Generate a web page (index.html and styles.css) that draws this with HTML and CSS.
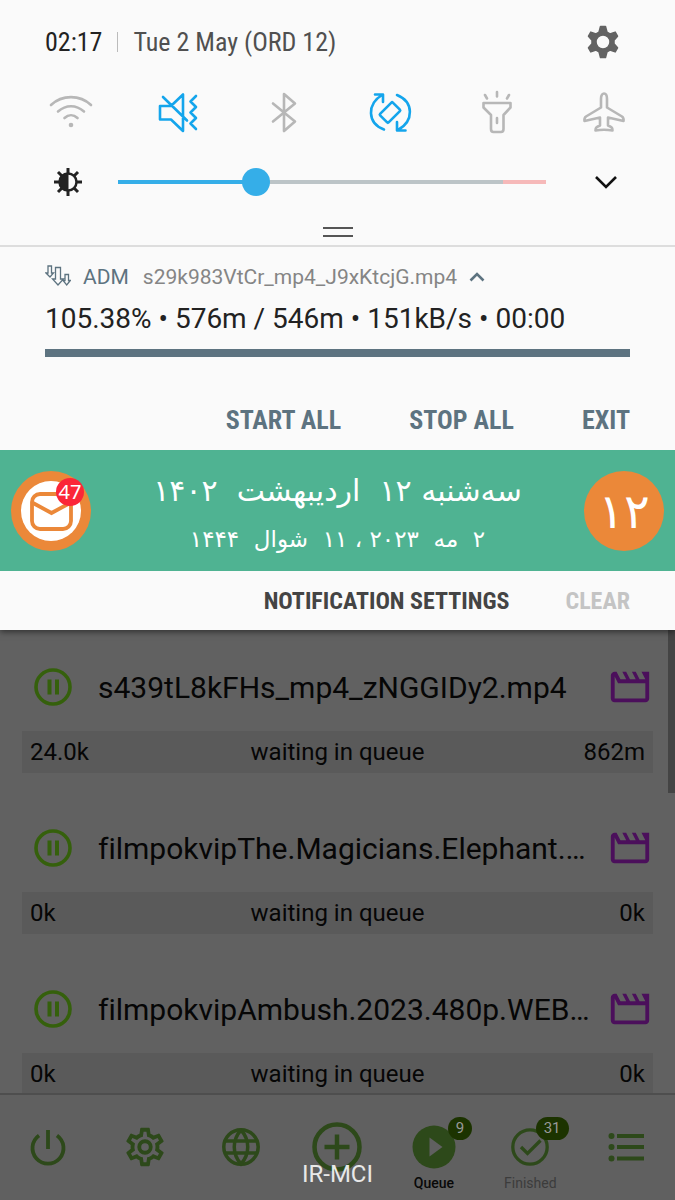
FILE: index.html
```html
<!DOCTYPE html>
<html lang="en">
<head>
    <meta charset="UTF-8">
    <meta name="viewport" content="width=device-width, initial-scale=1.0">
    <title>Notifications</title>
    <link rel="stylesheet" href="styles.css">
</head>
<body>
    <!-- Icons used more than once -->
    <svg class="sprite" aria-hidden="true">
        <symbol id="icon-pause" viewBox="0 0 46 46">
            <circle cx="23" cy="23" r="17" fill="none" stroke="currentColor" stroke-width="3.6"/>
            <path d="M17.5 15.5h4v15h-4zM25 15.5h4v15h-4z" fill="currentColor"/>
        </symbol>
        <symbol id="icon-movie" viewBox="0 0 24 24">
            <path d="M4 6.47L5.76 10H20v8H4V6.47M22 4h-4l2 4h-3l-2-4h-2l2 4h-3l-2-4H8l2 4H7L5 4H4c-1.1 0-1.99.9-1.99 2L2 18c0 1.1.9 2 2 2h16c1.1 0 2-.9 2-2V4z" fill="currentColor"/>
        </symbol>
    </svg>

    <section class="shade">
        <header class="status">
            <span class="time">02:17</span>
            <span class="separator"></span>
            <span class="date">Tue 2 May (ORD 12)</span>
            <button class="icon-btn settings" aria-label="Settings">
                <svg width="34" height="34" viewBox="-17 -17 34 34">
                    <path fill="#636363" fill-rule="evenodd" stroke="#636363" stroke-width="1.500" stroke-linejoin="round" d="M-2.500-15.500H2.500L4-9.800L7-8L12.200-9.900L14.500-5.800L11-1.700V1.700L14.500 5.800L12.200 9.900L7 8L4 9.800L2.500 15.500H-2.500L-4 9.800L-7 8L-12.200 9.900L-14.500 5.800L-11 1.700V-1.700L-14.500-5.800L-12.200-9.900L-7-8L-4-9.800ZM7 0A7 7 0 1 0-7 0A7 7 0 1 0 7 0Z"/>
                </svg>
            </button>
        </header>

        <div class="toggles">
            <button class="icon-btn" aria-label="Wi-Fi">
                <svg width="44" height="44" viewBox="0 0 44 44">
                    <g class="thin">
                        <path d="M2 15C13 4.500 31 4.500 42 15M9 21.500C17 14.500 27 14.500 35 21.500M15.500 28C19.500 24.300 24.500 24.300 28.500 28"/>
                    </g>
                    <circle cx="22" cy="35" r="2.300" fill="currentColor"/>
                </svg>
            </button>
            <button class="icon-btn on" aria-label="Vibrate">
                <svg width="44" height="44" viewBox="0 0 44 44">
                    <path class="thin" d="M4 16H15L27 4.500V41L15 29.500H4ZM7 7L31 30.500M40 6L34.500 11.500L40 17L34.500 22.500L40 28L34.500 33.500L40 39"/>
                </svg>
            </button>
            <button class="icon-btn" aria-label="Bluetooth">
                <svg width="44" height="44" viewBox="0 0 44 44">
                    <path class="thin" d="M11 13.500L33 31.500L22 41V4L33 13.500L11 31.500"/>
                </svg>
            </button>
            <button class="icon-btn on" aria-label="Auto rotate">
                <svg width="44" height="44" viewBox="0 0 44 44">
                    <path class="thin" d="M15 39.500C-2 33 -2 14 13 5M6 4.500H14V12M28 5C45 12 45 31 29 40M36.500 40.500H28V32"/>
                    <rect class="thin" x="12" y="16.500" width="18" height="12" rx="1" transform="rotate(-45 21 22.500)"/>
                </svg>
            </button>
            <button class="icon-btn" aria-label="Torch">
                <svg width="44" height="44" viewBox="0 0 44 44">
                    <path class="thin" d="M8.500 13H35.500V17.500L28.500 25V39Q28.500 42 26 42H18.500Q16 42 16 39V25L8.500 17.500ZM22 28V33M22 2V6.500M10 5L12 8.500M34 5L32 8.500"/>
                </svg>
            </button>
            <button class="icon-btn" aria-label="Flight mode">
                <svg width="44" height="44" viewBox="0 0 44 44">
                    <path class="thin" d="M22 3.500C24.500 3.500 25 7 25 9V17.500L40 26.500Q42 28 41.500 31L26 27.500V35.500C30 37 30.500 38 30.500 40.500Q22 39 13.500 40.500C13.500 38 14 37 18 35.500V27.500L2.500 31Q2 28 4 26.500L19 17.500V9C19 7 19.500 3.500 22 3.500Z"/>
                </svg>
            </button>
        </div>

        <div class="brightness">
            <svg width="28" height="28" viewBox="-14 -14 28 28" aria-hidden="true">
                <g stroke="#222" stroke-width="3">
                    <path d="M0-14V-8M0 8V14M-14 0H-8M8 0H14M-10-10L-6-6M10-10L6-6M-10 10L-6 6M10 10L6 6"/>
                    <circle r="8.500" fill="#fafafa" stroke-width="2.500"/>
                </g>
                <path d="M.5-9A9 9 0 0 0 .5 9Z" fill="#222"/>
            </svg>
            <input type="range" class="slider" min="0" max="100" value="31" aria-label="Brightness">
            <button class="icon-btn" aria-label="More">
                <svg width="24" height="24" viewBox="0 0 24 24">
                    <path d="M2 7L12 17L22 7" fill="none" stroke="#111" stroke-width="2.600"/>
                </svg>
            </button>
        </div>
        <div class="handle"></div>

        <article class="download">
            <div class="app-line">
                <svg width="26" height="24" viewBox="0 0 26 24" fill="none" stroke="#5d7380" stroke-width="1.300" aria-hidden="true">
                    <path d="M3 1H6.500V8H8.500L5 12L1 8H3ZM10.500 2.500H15.500V14H18.500L13 20L7.500 14H10.500ZM20 9.500H23.500V15.500H25.300L21.700 20L18 15.500H20Z"/>
                </svg>
                <span class="app-name">ADM</span>
                <span class="app-file">s29k983VtCr_mp4_J9xKtcjG.mp4</span>
                <button class="icon-btn" aria-label="Collapse">
                    <svg width="16" height="16" viewBox="0 0 16 16">
                        <path d="M1.500 11.500L8 5L14.500 11.500" fill="none" stroke="#5d7380" stroke-width="2.600"/>
                    </svg>
                </button>
            </div>
            <p class="stats">105.38% • 576m / 546m • 151kB/s • 00:00</p>
            <progress class="progress" max="100" value="100" aria-label="Download progress"></progress>
            <div class="actions">
                <button>START ALL</button>
                <button>STOP ALL</button>
                <button>EXIT</button>
            </div>
        </article>

        <article class="calendar">
            <button class="round mail" aria-label="Messages">
                <svg width="60" height="60" viewBox="0 0 60 60">
                    <circle cx="30" cy="30" r="30" fill="#fff"/>
                    <rect x="11" y="13" width="39" height="35" rx="8" fill="none" stroke="#eb8839" stroke-width="3.800"/>
                    <path d="M12 22L30.500 32L49 22" fill="none" stroke="#eb8839" stroke-width="3.800"/>
                </svg>
                <span class="unread">47</span>
            </button>
            <div class="dates" lang="fa" dir="rtl">
                <p class="date-main">سه‌شنبه ۱۲ &nbsp;اردیبهشت &nbsp;۱۴۰۲</p>
                <p class="date-sub">۲ &nbsp;مه &nbsp;۲۰۲۳ ، ۱۱ &nbsp;شوال &nbsp;۱۴۴۴</p>
            </div>
            <div class="round day" lang="fa">۱۲</div>
        </article>

        <footer class="shade-footer">
            <button>NOTIFICATION SETTINGS</button>
            <button disabled>CLEAR</button>
        </footer>
    </section>

    <main class="queue">
        <article class="item">
            <div class="item-head">
                <button class="icon-btn pause" aria-label="Pause"><svg width="46" height="46"><use href="#icon-pause"/></svg></button>
                <h2>s439tL8kFHs_mp4_zNGGIDy2.mp4</h2>
                <svg class="movie" width="46" height="46" aria-hidden="true"><use href="#icon-movie"/></svg>
            </div>
            <div class="item-bar"><span>24.0k</span><span>waiting in queue</span><span>862m</span></div>
        </article>
        <article class="item">
            <div class="item-head">
                <button class="icon-btn pause" aria-label="Pause"><svg width="46" height="46"><use href="#icon-pause"/></svg></button>
                <h2>filmpokvipThe.Magicians.Elephant.…</h2>
                <svg class="movie" width="46" height="46" aria-hidden="true"><use href="#icon-movie"/></svg>
            </div>
            <div class="item-bar"><span>0k</span><span>waiting in queue</span><span>0k</span></div>
        </article>
        <article class="item">
            <div class="item-head">
                <button class="icon-btn pause" aria-label="Pause"><svg width="46" height="46"><use href="#icon-pause"/></svg></button>
                <h2>filmpokvipAmbush.2023.480p.WEB…</h2>
                <svg class="movie" width="46" height="46" aria-hidden="true"><use href="#icon-movie"/></svg>
            </div>
            <div class="item-bar"><span>0k</span><span>waiting in queue</span><span>0k</span></div>
        </article>
        <div class="scroll-thumb"></div>
    </main>

    <nav class="tabs">
        <button aria-label="Exit">
            <svg width="50" height="50" viewBox="0 0 50 50">
                <path d="M16 13.500A15.500 15.500 0 1 0 34 13.500M25 8V27" fill="none" stroke="currentColor" stroke-width="3.800"/>
            </svg>
        </button>
        <button aria-label="Preferences">
            <svg width="46" height="46" viewBox="0 0 24 24">
                <path d="M12,8A4,4 0 0,1 16,12A4,4 0 0,1 12,16A4,4 0 0,1 8,12A4,4 0 0,1 12,8M12,10A2,2 0 0,0 10,12A2,2 0 0,0 12,14A2,2 0 0,0 14,12A2,2 0 0,0 12,10M10,22C9.75,22 9.54,21.82 9.5,21.58L9.13,18.93C8.5,18.68 7.96,18.34 7.44,17.94L4.95,18.95C4.73,19.03 4.46,18.95 4.34,18.73L2.34,15.27C2.21,15.05 2.27,14.78 2.46,14.63L4.57,12.97L4.5,12L4.57,11L2.46,9.37C2.27,9.22 2.21,8.95 2.34,8.73L4.34,5.27C4.46,5.05 4.73,4.96 4.95,5.05L7.44,6.05C7.96,5.66 8.5,5.32 9.13,5.07L9.5,2.42C9.54,2.18 9.75,2 10,2H14C14.25,2 14.46,2.18 14.5,2.42L14.87,5.07C15.5,5.32 16.04,5.66 16.56,6.05L19.05,5.05C19.27,4.96 19.54,5.05 19.66,5.27L21.66,8.73C21.79,8.95 21.73,9.22 21.54,9.37L19.43,11L19.5,12L19.43,13L21.54,14.63C21.73,14.78 21.79,15.05 21.66,15.27L19.66,18.73C19.54,18.95 19.27,19.04 19.05,18.95L16.56,17.95C16.04,18.34 15.5,18.68 14.87,18.93L14.5,21.58C14.46,21.82 14.25,22 14,22H10M11.25,4L10.88,6.61C9.68,6.86 8.62,7.5 7.85,8.39L5.44,7.35L4.69,8.65L6.8,10.2C6.4,11.37 6.4,12.64 6.8,13.8L4.68,15.36L5.43,16.66L7.86,15.62C8.63,16.5 9.68,17.14 10.87,17.38L11.24,20H12.76L13.13,17.39C14.32,17.14 15.37,16.5 16.14,15.62L18.57,16.66L19.32,15.36L17.2,13.81C17.6,12.64 17.6,11.37 17.2,10.2L19.31,8.65L18.56,7.35L16.15,8.39C15.38,7.5 14.32,6.86 13.12,6.62L12.75,4H11.25Z" fill="currentColor"/>
            </svg>
        </button>
        <button aria-label="Browser">
            <svg width="50" height="50" viewBox="0 0 50 50" fill="none" stroke="currentColor" stroke-width="3.500">
                <circle cx="25" cy="25" r="17.200"/>
                <path d="M25 8C16 18 16 32 25 42C34 32 34 18 25 8M9 19H41M9 31H41"/>
            </svg>
        </button>
        <button aria-label="Add">
            <svg width="50" height="50" viewBox="0 0 50 50" fill="none" stroke="currentColor" stroke-width="4.500">
                <circle cx="25" cy="25" r="22.500"/>
                <path d="M25 12.500V37.500M12.500 25H37.500"/>
            </svg>
        </button>
        <button class="active">
            <svg width="50" height="50" viewBox="0 0 50 50" aria-hidden="true">
                <circle cx="25" cy="25" r="21.500" fill="currentColor"/>
                <path d="M20.500 15.500V34.500L33.500 25Z" fill="#606060"/>
            </svg>
            <span class="tab-label">Queue</span>
            <span class="badge">9</span>
        </button>
        <button>
            <svg width="50" height="50" viewBox="0 0 50 50" fill="none" stroke="currentColor" stroke-width="3.300" aria-hidden="true">
                <circle cx="25" cy="25" r="17.200"/>
                <path d="M16 25L22.500 31.500L35.500 18.500"/>
            </svg>
            <span class="tab-label">Finished</span>
            <span class="badge">31</span>
        </button>
        <button aria-label="Menu">
            <svg width="50" height="50" viewBox="0 0 50 50" fill="currentColor">
                <path d="M15 12h27v4H15zM15 23h27v4H15zM15 34.500h27v4H15z"/>
                <circle cx="9.500" cy="14" r="3"/>
                <circle cx="9.500" cy="25" r="3"/>
                <circle cx="9.500" cy="36.500" r="3"/>
            </svg>
        </button>
        <span class="carrier">IR-MCI</span>
    </nav>
</body>
</html>
```
FILE: styles.css
```css
:root {
    --panel: #fafafa;
    --dim: #616161;
    --slate: #5d7380;
    --blue: #35aee8;
    --green: #2d491a;
    --orange: #eb8839;
    --font: Roboto, "Noto Sans", sans-serif;
    --font-condensed: "Roboto Condensed", "Liberation Sans Narrow", Roboto, sans-serif;
}

* {
    box-sizing: border-box;
    margin: 0;
    padding: 0;
}

body {
    display: flex;
    flex-direction: column;
    height: 100vh;
    overflow: hidden;
    background: var(--dim);
    color: #222;
    font-family: var(--font);
}

button {
    border: none;
    background: none;
    color: inherit;
    font: inherit;
    white-space: nowrap;
    cursor: pointer;
}

svg {
    display: block;
    flex: none;
}

.sprite {
    position: absolute;
    width: 0;
    height: 0;
}

.icon-btn {
    display: flex;
    flex: none;
}

/* Notification shade */
.shade {
    position: relative;
    z-index: 1;
    flex: none;
    background: var(--panel);
    box-shadow: 0 2px 6px rgba(0, 0, 0, 0.5);
}

.status {
    display: flex;
    align-items: center;
    height: 84px;
    padding: 0 55px 0 45px;
    font-family: var(--font-condensed);
    font-size: 26px;
}

.separator {
    width: 1px;
    height: 20px;
    margin: 0 15px;
    background: #bbb;
}

.date {
    color: #505050;
}

.settings {
    margin-left: auto;
}

.toggles {
    display: grid;
    grid-template-columns: repeat(6, 1fr);
    justify-items: center;
    align-items: center;
    height: 56px;
    padding: 0 18px;
    color: #b7b7b7;
}

.toggles .on {
    color: #14a5ec;
}

.thin {
    fill: none;
    stroke: currentColor;
    stroke-width: 2.6;
    stroke-linejoin: round;
    stroke-linecap: round;
}

.brightness {
    display: flex;
    align-items: center;
    height: 84px;
    padding: 0 57px 0 54px;
}

.slider {
    flex: 1;
    min-width: 0;
    height: 28px;
    margin: 0 48px 0 36px;
    background: linear-gradient(to right, var(--blue) 32%, #bcc4c7 32%, #bcc4c7 90%, #f6b9b9 90%) center / 100% 4px no-repeat;
    -webkit-appearance: none;
    appearance: none;
}

.slider::-webkit-slider-thumb {
    width: 28px;
    height: 28px;
    border-radius: 50%;
    background: var(--blue);
    -webkit-appearance: none;
}

.handle {
    height: 23px;
    padding-top: 3px;
    border-bottom: 2px solid #ddd;
}

.handle::before {
    content: "";
    display: block;
    width: 30px;
    height: 6px;
    margin: 0 auto;
    border: solid #555;
    border-width: 2px 0;
}

.download {
    height: 203px;
    padding: 14px 45px 0;
}

.app-line {
    display: flex;
    align-items: center;
    height: 32px;
    font-size: 21px;
}

.app-name {
    margin: 0 14px 0 12px;
    color: var(--slate);
}

.app-file {
    margin-right: 12px;
    color: #858585;
}

.stats {
    font-size: 28px;
    line-height: 52px;
}

.progress {
    display: block;
    width: 100%;
    height: 8px;
    margin-top: 4px;
    border: none;
    background: #d8dde0;
    -webkit-appearance: none;
    appearance: none;
}

.progress::-webkit-progress-bar {
    background: #d8dde0;
}

.progress::-webkit-progress-value {
    background: var(--slate);
}

.actions,
.shade-footer {
    display: flex;
    justify-content: flex-end;
    font-family: var(--font-condensed);
    font-weight: 700;
}

.actions {
    gap: 68px;
    margin-top: 47px;
    color: var(--slate);
    font-size: 26px;
    line-height: 32px;
}

.calendar {
    display: flex;
    align-items: center;
    justify-content: space-between;
    height: 121px;
    padding: 0 11px;
    background: #4fb392;
    color: #fff;
}

.round {
    position: relative;
    display: flex;
    align-items: center;
    justify-content: center;
    width: 80px;
    height: 80px;
    border-radius: 50%;
    background: var(--orange);
}

.unread {
    position: absolute;
    top: 7px;
    right: 7px;
    width: 28px;
    height: 28px;
    border-radius: 50%;
    background: #fb2638;
    font-family: "Noto Sans", sans-serif;
    font-size: 20px;
    line-height: 28px;
    text-align: center;
}

.dates {
    padding-top: 4px;
    font-family: "DejaVu Sans", sans-serif;
    text-align: center;
    white-space: nowrap;
}

.date-main {
    font-size: 30px;
    line-height: 52px;
}

.date-sub {
    font-size: 23px;
    line-height: 44px;
}

.day {
    font-family: "DejaVu Sans", sans-serif;
    font-size: 48px;
    line-height: 56px;
}

.shade-footer {
    align-items: center;
    gap: 56px;
    height: 59px;
    padding: 0 45px;
    color: #444;
    font-size: 24px;
}

.shade-footer button:disabled {
    color: #c4c4c4;
}

/* Download queue */
.queue {
    position: relative;
    flex: 1;
    min-height: 0;
    padding-top: 1px;
    overflow: hidden;
    color: #060606;
}

.item {
    height: 161px;
    padding: 28px 22px 0;
}

.item-head {
    display: flex;
    align-items: center;
    height: 56px;
    padding-left: 8px;
}

.item-head h2 {
    flex: 1;
    min-width: 0;
    margin-left: 22px;
    font-size: 30px;
    font-weight: 400;
    font-variant-ligatures: none;
    white-space: nowrap;
}

.pause {
    color: #35600c;
}

.movie {
    color: #4b0f5b;
}

.item-bar {
    display: grid;
    grid-template-columns: 1fr auto 1fr;
    align-items: center;
    height: 42px;
    margin-top: 16px;
    padding: 0 8px;
    background: #5a5a5a;
    font-size: 24px;
}

.item-bar span:last-child {
    text-align: right;
}

.scroll-thumb {
    position: absolute;
    top: 0;
    right: 0;
    width: 7px;
    height: 163px;
    background: #444;
}

/* Bottom tabs */
.tabs {
    position: relative;
    display: grid;
    flex: none;
    grid-template-columns: repeat(7, 1fr);
    height: 107px;
    border-top: 2px solid #4e4e4e;
    background: #606060;
    color: var(--green);
}

.tabs button {
    position: relative;
    display: flex;
    flex-direction: column;
    align-items: center;
    padding-top: 27px;
}

.tabs svg {
    height: 50px;
}

.tab-label {
    color: #3c3c3c;
    font-size: 14px;
    line-height: 22px;
}

.active .tab-label {
    color: #080808;
    font-weight: 500;
}

.badge {
    position: absolute;
    top: 22px;
    right: 10px;
    min-width: 24px;
    height: 23px;
    padding: 0 8px;
    border-radius: 12px;
    background: #1c3300;
    color: #999;
    font-size: 15px;
    line-height: 23px;
}

.carrier {
    position: absolute;
    right: 0;
    bottom: 11px;
    left: 0;
    color: #e8e8e8;
    font-size: 24px;
    line-height: 30px;
    text-align: center;
}
```
